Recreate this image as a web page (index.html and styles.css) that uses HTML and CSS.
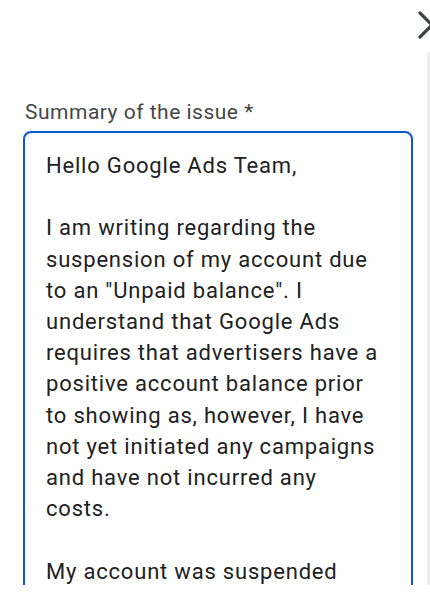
FILE: index.html
```html
<!DOCTYPE html>
<html lang="en">
<head>
    <meta charset="UTF-8">
    <meta name="viewport" content="width=device-width, initial-scale=1.0">
    <title>Summary of the issue</title>
    <link rel="stylesheet" href="styles.css">
</head>
<body>
    <div class="dialog">
        <div class="dialog-header">
            <button class="close-btn" aria-label="Close">
                <svg width="28" height="28" viewBox="0 0 28 28">
                    <path d="M2 2 L26 26 M26 2 L2 26" stroke="#3c4043" stroke-width="3.2" stroke-linecap="round" fill="none"/>
                </svg>
            </button>
        </div>

        <div class="dialog-body">
            <div class="content">
                <div class="field">
                    <label class="field-label" for="summary">Summary of the issue *</label>
                    <div class="field-box" id="summary">Hello Google Ads Team,

I am writing regarding the suspension of my account due to an "Unpaid balance". I understand that Google Ads requires that advertisers have a positive account balance prior to showing as, however, I have not yet initiated any campaigns and have not incurred any costs.

My account was suspended without any prior notice and I have not been able to resolve this through the billing page.</div>
                </div>
            </div>
            <div class="scroll-track"></div>
        </div>
    </div>
</body>
</html>
```

FILE: styles.css
```css
html, body {
    margin: 0;
    padding: 0;
    background-color: #fff;
    overflow: hidden;
}

body {
    font-family: Roboto, "Noto Sans", Arial, sans-serif;
    color: #202124;
    width: 430px;
    height: 597px;
}

.dialog {
    width: 430px;
    height: 597px;
    display: flex;
    flex-direction: column;
}

.dialog-header {
    height: 52px;
    display: flex;
    justify-content: flex-end;
    padding-top: 11px;
    box-sizing: border-box;
}

.close-btn {
    width: 28px;
    height: 28px;
    padding: 0;
    margin-right: -16px;
    border: none;
    background: none;
    cursor: pointer;
}

.close-btn svg {
    display: block;
}

.dialog-body {
    height: 533px;
    display: flex;
    overflow: hidden;
}

.content {
    flex: 1;
    padding: 48px 14px 0 23px;
}

.scroll-track {
    width: 3px;
    background-color: #eeeeee;
}

.field-label {
    display: block;
    padding-left: 2px;
    font-size: 21px;
    line-height: 24px;
    letter-spacing: 0.5px;
    color: #444746;
    margin-bottom: 7px;
}

.field-box {
    border: 2px solid #0b57d0;
    border-radius: 8px;
    padding: 17px 25px 20px 21px;
    font-size: 22px;
    line-height: 31.2px;
    letter-spacing: 0.8px;
    color: #202124;
    white-space: pre-wrap;
}
```
